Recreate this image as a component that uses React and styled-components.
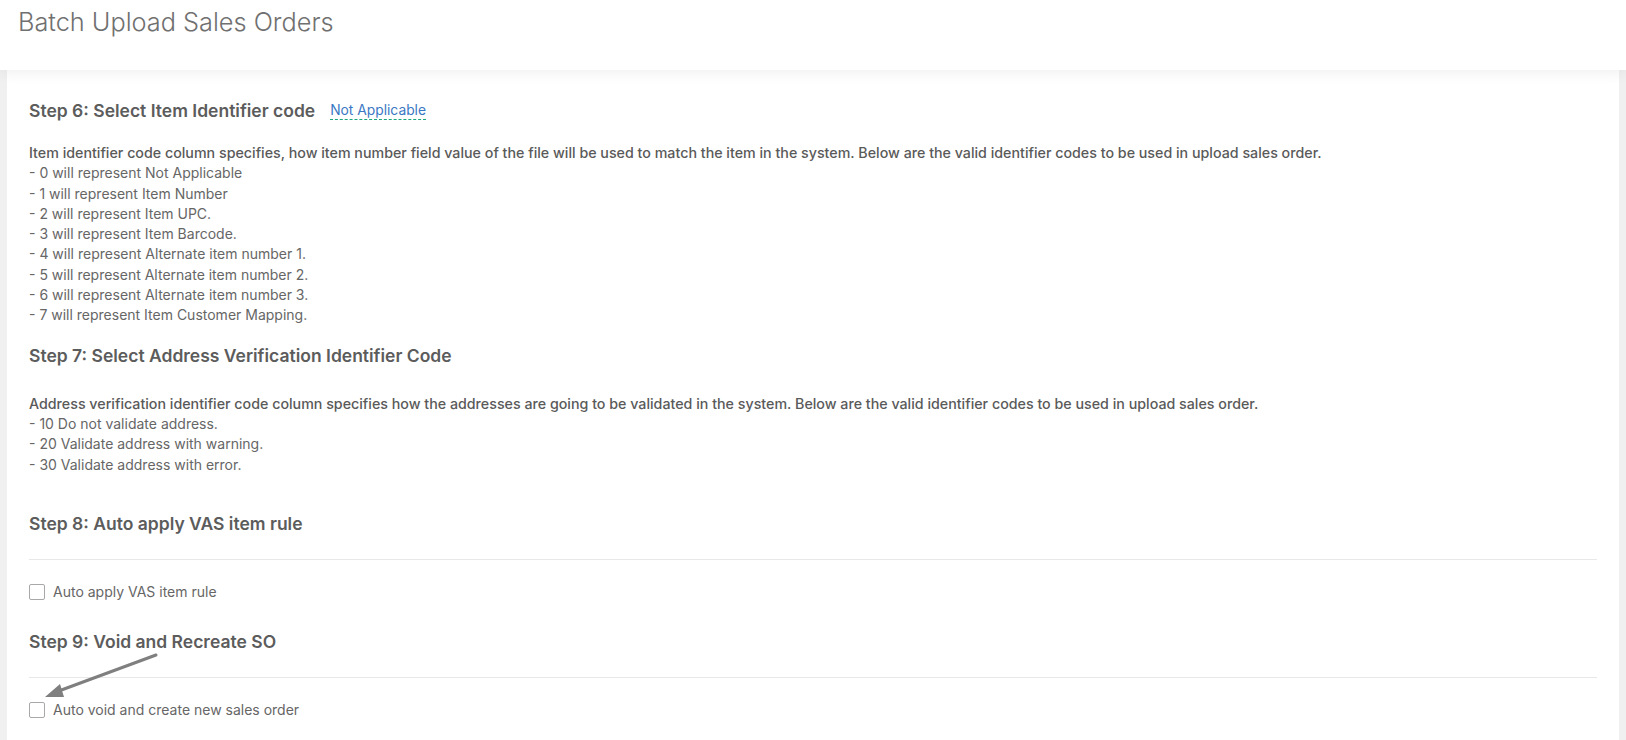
import React from 'react';
import styled, { createGlobalStyle } from 'styled-components';

const GlobalStyle = createGlobalStyle`
  body {
    margin: 0;
    font-family: Inter, "Noto Sans", Arial, sans-serif;
    background: #f0f0f0;
  }
`;

const Page = styled.div`
  position: relative;
  min-height: 740px;
  background: #f0f0f0;
`;

const Header = styled.header`
  position: relative;
  z-index: 2;
  height: 70px;
  background: #ffffff;
  padding: 7px 18px 0;
  box-sizing: border-box;
  box-shadow: 0 2px 14px rgba(0, 0, 0, 0.07);
`;

const PageTitle = styled.h1`
  margin: 0;
  font-size: 25.3px;
  line-height: 30px;
  font-weight: 300;
  color: #707070;
`;

const Main = styled.main`
  padding: 0 7px;
`;

const Panel = styled.section`
  background: #ffffff;
  padding: 29px 22px 30px;
  min-height: 670px;
  box-sizing: border-box;
`;

const StepTitle = styled.h2`
  display: flex;
  align-items: center;
  gap: 15px;
  margin: ${(p) => p.$mt || 0}px 0 0;
  font-size: 17.5px;
  line-height: 24px;
  font-weight: 600;
  color: #5c5c5c;
`;

const ValueLink = styled.a`
  font-size: 13.8px;
  font-weight: 400;
  color: #3b78c4;
  text-decoration: none;
  border-bottom: 1px dashed #19a87f;
  line-height: 17px;
  cursor: pointer;
`;

const Notes = styled.div`
  margin-top: ${(p) => p.$mt}px;
  font-size: 14px;
  line-height: 20.3px;
  color: #666666;
`;

const Lead = styled.div`
  font-size: 14.25px;
  font-weight: 500;
  color: #5a5a5a;
`;

const Divider = styled.hr`
  margin: ${(p) => p.$mt}px 0 0;
  border: 0;
  border-top: 1px solid #e8e8e8;
`;

const CheckRow = styled.label`
  display: flex;
  align-items: center;
  gap: 8px;
  margin-top: ${(p) => p.$mt}px;
  font-size: 14px;
  line-height: 20px;
  color: #666666;
  cursor: pointer;
`;

const Box = styled.span`
  width: 16px;
  height: 16px;
  box-sizing: border-box;
  border: 1px solid #a8a8a8;
  border-radius: 2px;
  background: #fff;
`;

const Pointer = styled.svg`
  position: absolute;
  left: 0;
  top: 0;
  pointer-events: none;
  z-index: 3;
`;

const itemCodes = [
  '- 0 will represent Not Applicable',
  '- 1 will represent Item Number',
  '- 2 will represent Item UPC.',
  '- 3 will represent Item Barcode.',
  '- 4 will represent Alternate item number 1.',
  '- 5 will represent Alternate item number 2.',
  '- 6 will represent Alternate item number 3.',
  '- 7 will represent Item Customer Mapping.',
];

const addressCodes = [
  '- 10 Do not validate address.',
  '- 20 Validate address with warning.',
  '- 30 Validate address with error.',
];

const App = () => {
  return (
    <Page>
      <GlobalStyle />
      <Header>
        <PageTitle>Batch Upload Sales Orders</PageTitle>
      </Header>
      <Main>
        <Panel>
          <StepTitle>
            Step 6: Select Item Identifier code
            <ValueLink>Not Applicable</ValueLink>
          </StepTitle>
          <Notes $mt={20}>
            <Lead>
              Item identifier code column specifies, how item number field value of the file will be used to match the item in the system. Below are the valid identifier codes to be used in upload sales order.
            </Lead>
            {itemCodes.map((line) => (
              <div key={line}>{line}</div>
            ))}
          </Notes>

          <StepTitle $mt={18}>Step 7: Select Address Verification Identifier Code</StepTitle>
          <Notes $mt={26}>
            <Lead>
              Address verification identifier code column specifies how the addresses are going to be validated in the system. Below are the valid identifier codes to be used in upload sales order.
            </Lead>
            {addressCodes.map((line) => (
              <div key={line}>{line}</div>
            ))}
          </Notes>

          <StepTitle $mt={37}>Step 8: Auto apply VAS item rule</StepTitle>
          <Divider $mt={23} />
          <CheckRow $mt={22}>
            <Box />
            Auto apply VAS item rule
          </CheckRow>

          <StepTitle $mt={28}>Step 9: Void and Recreate SO</StepTitle>
          <Divider $mt={23} />
          <CheckRow $mt={22}>
            <Box />
            Auto void and create new sales order
          </CheckRow>
        </Panel>
      </Main>

      <Pointer width="1626" height="740" viewBox="0 0 1626 740">
        <line x1="156" y1="655" x2="56" y2="692" stroke="#7f7f7f" strokeWidth="3" strokeLinecap="round" />
        <polygon points="45,697 60,684 64,697" fill="#7f7f7f" />
      </Pointer>
    </Page>
  );
};

export default App;
